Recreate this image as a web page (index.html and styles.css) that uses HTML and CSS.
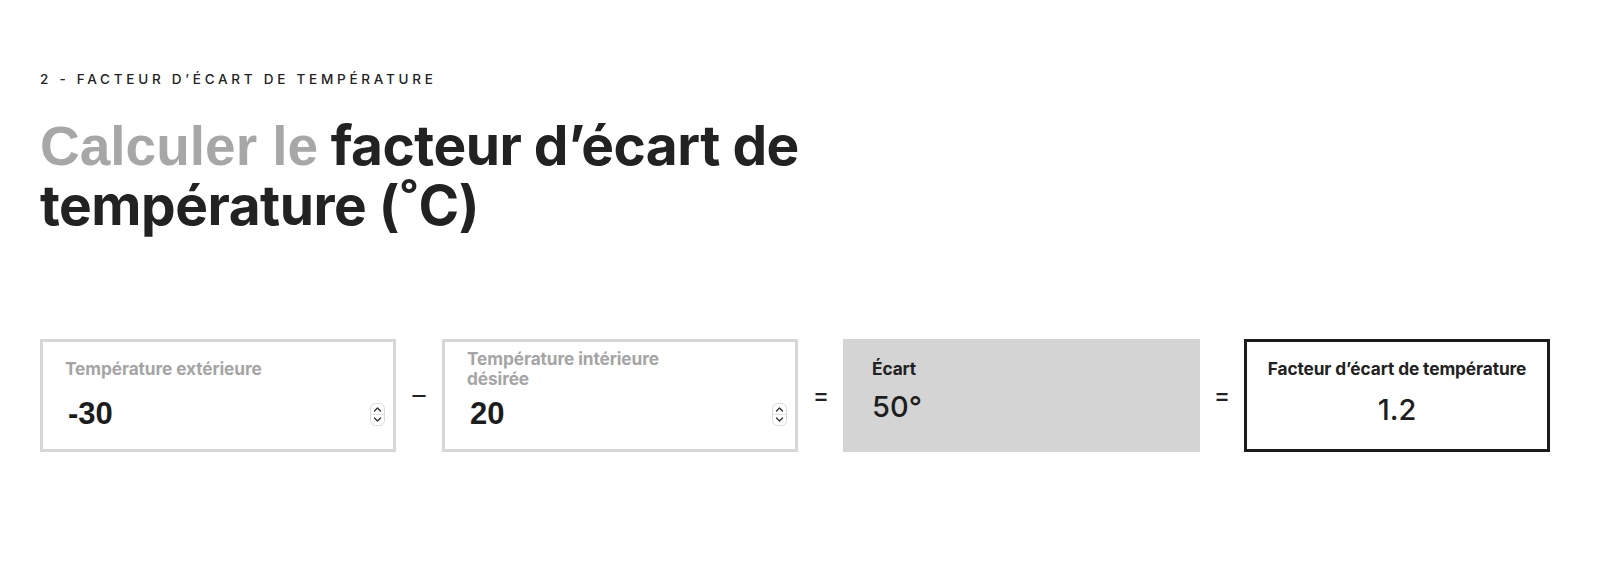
FILE: index.html
```html
<!DOCTYPE html>
<html lang="fr">
<head>
<meta charset="utf-8">
<title>Facteur d'écart de température</title>
<link rel="stylesheet" href="styles.css">
</head>
<body>
<section class="section">
  <p class="eyebrow">2 - Facteur d’écart de température</p>
  <h1 class="title"><span class="title-muted">Calculer le</span> facteur d’écart de<br>température (˚C)</h1>

  <div class="calc">
    <label class="field field-input">
      <span class="field-label">Température extérieure</span>
      <span class="input-row">
        <input class="input" type="text" value="-30">
        <svg class="spinner" width="15" height="23" viewBox="0 0 15 23" aria-hidden="true">
          <rect x="0.5" y="0.5" width="14" height="22" rx="5" fill="#fff" stroke="#d9d9d9"/>
          <line x1="1" y1="11.5" x2="14" y2="11.5" stroke="#e3e3e3"/>
          <path d="M4.5 8 L7.5 5 L10.5 8" fill="none" stroke="#333" stroke-width="1.4" stroke-linecap="round" stroke-linejoin="round"/>
          <path d="M4.5 15 L7.5 18 L10.5 15" fill="none" stroke="#333" stroke-width="1.4" stroke-linecap="round" stroke-linejoin="round"/>
        </svg>
      </span>
    </label>

    <span class="op op-minus">–</span>

    <label class="field field-input">
      <span class="field-label">Température intérieure désirée</span>
      <span class="input-row">
        <input class="input" type="text" value="20">
        <svg class="spinner" width="15" height="23" viewBox="0 0 15 23" aria-hidden="true">
          <rect x="0.5" y="0.5" width="14" height="22" rx="5" fill="#fff" stroke="#d9d9d9"/>
          <line x1="1" y1="11.5" x2="14" y2="11.5" stroke="#e3e3e3"/>
          <path d="M4.5 8 L7.5 5 L10.5 8" fill="none" stroke="#333" stroke-width="1.4" stroke-linecap="round" stroke-linejoin="round"/>
          <path d="M4.5 15 L7.5 18 L10.5 15" fill="none" stroke="#333" stroke-width="1.4" stroke-linecap="round" stroke-linejoin="round"/>
        </svg>
      </span>
    </label>

    <span class="op">=</span>

    <div class="field field-diff">
      <span class="field-label field-label-dark">Écart</span>
      <span class="diff-value">50°</span>
    </div>

    <span class="op op-last">=</span>

    <div class="field field-result">
      <span class="field-label field-label-dark">Facteur d’écart de température</span>
      <span class="result-value">1.2</span>
    </div>
  </div>
</section>
</body>
</html>
```

FILE: styles.css
```css
* {
  box-sizing: border-box;
}

html, body {
  margin: 0;
  padding: 0;
  background: #ffffff;
}

body {
  font-family: "Inter", "Liberation Sans", sans-serif;
  color: #222222;
}

.section {
  padding: 71px 40px 0 40px;
}

.eyebrow {
  margin: 0;
  font-family: "Inter", sans-serif;
  font-size: 13.5px;
  line-height: 16px;
  font-weight: 500;
  letter-spacing: 3.75px;
  text-transform: uppercase;
  color: #222222;
}

.title {
  margin: 29px 0 0 0;
  font-family: "Inter", sans-serif;
  font-size: 55px;
  line-height: 59px;
  font-weight: 700;
  letter-spacing: -0.5px;
  color: #222222;
}

.title-muted {
  font-family: "Liberation Sans", Arial, sans-serif;
  font-size: 55px;
  letter-spacing: 0;
  color: #a7a7a7;
}

.calc {
  display: flex;
  align-items: center;
  margin-top: 104px;
}

.field {
  display: flex;
  flex-direction: column;
  height: 113px;
  flex: none;
}

.field-input {
  width: 356px;
  border: 3px solid #d7d7d7;
  padding: 7px 8px 0 22px;
  background: #ffffff;
}

.field-label {
  display: flex;
  align-items: center;
  height: 40px;
  max-width: 235px;
  font-family: "Inter", sans-serif;
  font-size: 17.3px;
  line-height: 20px;
  font-weight: 700;
  letter-spacing: -0.1px;
  color: #a5a5a5;
}

.field-label-dark {
  color: #222222;
}

.input-row {
  display: flex;
  align-items: center;
  margin-top: 8px;
}

.input {
  flex: 1;
  min-width: 0;
  border: 0;
  outline: none;
  padding: 0 0 0 3px;
  margin: 0;
  background: transparent;
  font-family: "Liberation Sans", Arial, sans-serif;
  font-size: 31px;
  line-height: 34px;
  height: 34px;
  font-weight: 700;
  color: #1c1c1c;
}

.spinner {
  display: block;
  flex: none;
  margin-left: 4px;
}

.op {
  flex: none;
  width: 46px;
  text-align: center;
  font-family: "Inter", sans-serif;
  font-size: 24px;
  font-weight: 500;
  color: #222222;
}

.op-minus {
  font-size: 26px;
  font-weight: 400;
  padding-bottom: 2px;
}

.op + .field-diff {
  margin-left: -1px;
}

.op-last {
  width: 44px;
}

.field-diff {
  width: 357px;
  background: #d4d4d4;
  padding: 10px 20px 0 29px;
}

.field-diff .field-label {
  height: 40px;
}

.diff-value {
  margin-top: 0;
  font-family: "Inter", sans-serif;
  font-size: 29px;
  line-height: 36px;
  font-weight: 500;
  color: #1e1e1e;
}

.field-result {
  width: 306px;
  border: 3px solid #1c1c1c;
  padding: 7px 10px 0 10px;
  align-items: center;
  text-align: center;
}

.field-result .field-label {
  max-width: none;
  justify-content: center;
}

.result-value {
  margin-top: 3px;
  font-family: "Inter", sans-serif;
  font-size: 29px;
  line-height: 36px;
  font-weight: 500;
  color: #1e1e1e;
}
```
